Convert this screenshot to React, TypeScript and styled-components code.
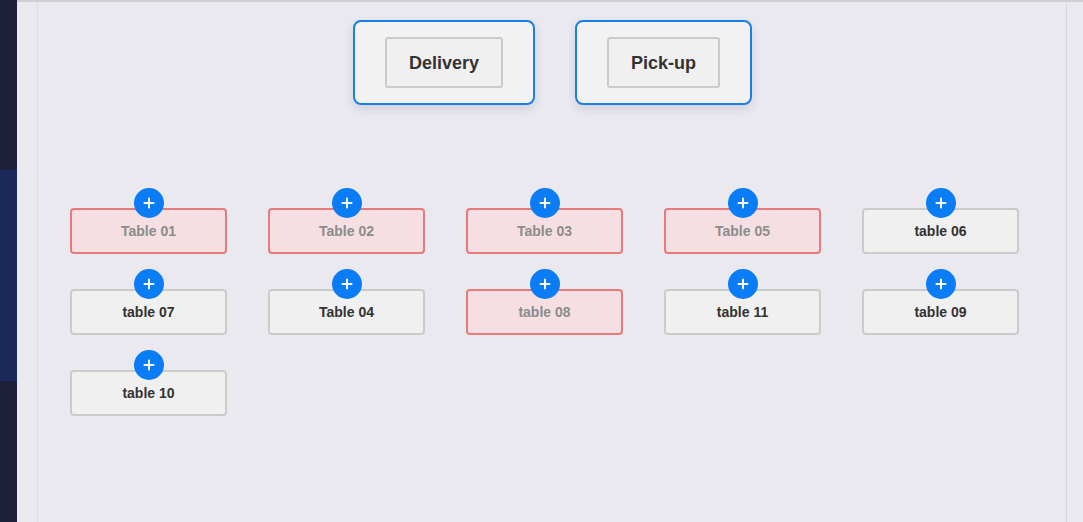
import React from "react";
import styled, { createGlobalStyle } from "styled-components";

const Global = createGlobalStyle`
  html, body { margin: 0; padding: 0; }
  body { font-family: "Liberation Sans", Arial, sans-serif; background: #e9e9ef; }
  * { box-sizing: border-box; }
`;

const Shell = styled.div`
  display: flex;
  height: 522px;
  width: 1083px;
  overflow: hidden;
`;

const Sidebar = styled.nav`
  width: 17px;
  flex: none;
  display: flex;
  flex-direction: column;
  background: #1c2039;
`;

const SideSection = styled.div<{ $active?: boolean; $h: number }>`
  height: ${(p) => p.$h}px;
  background: ${(p) => (p.$active ? "#1b2a5b" : "#1c2039")};
`;

const Main = styled.main`
  flex: 1;
  display: flex;
  border-top: 2px solid #cfcfd4;
  padding: 0 16px 0 20px;
  background: #e9e9ef;
`;

const Content = styled.section`
  flex: 1;
  border-left: 1px solid #dcdce3;
  border-right: 1px solid #d6d6dd;
  padding: 18px 46px 0 32px;
  display: flex;
  flex-direction: column;
`;

const ModeRow = styled.div`
  display: flex;
  justify-content: center;
  gap: 40px;
  padding-left: 15px;
`;

const ModeCard = styled.div`
  border: 2px solid #1a7fe8;
  border-radius: 8px;
  background: #f2f2f3;
  padding: 15px 30px;
  box-shadow: 0 4px 10px rgba(30, 40, 80, 0.12);
  display: flex;
`;

const ModeButton = styled.button`
  height: 51px;
  padding: 1px 22px 0;
  border: 2px solid #cbcbcb;
  border-radius: 3px;
  background: #f0f0f0;
  font-family: "Liberation Sans", Arial, sans-serif;
  font-size: 18px;
  font-weight: 700;
  color: #333;
`;

const TableGrid = styled.div`
  margin-top: 103px;
  display: grid;
  grid-template-columns: repeat(5, 157px);
  column-gap: 41px;
  row-gap: 35px;
`;

const TableCell = styled.div`
  position: relative;
`;

const TableBox = styled.div<{ $busy?: boolean }>`
  height: 46px;
  border: 2px solid ${(p) => (p.$busy ? "#e77a7a" : "#cbcbcb")};
  background: ${(p) => (p.$busy ? "#f5dfe2" : "#f0f0f0")};
  border-radius: 4px;
  display: flex;
  align-items: center;
  justify-content: center;
  font-size: 14px;
  font-weight: 700;
  color: ${(p) => (p.$busy ? "#8c8c8c" : "#333")};
`;

const AddBadge = styled.button`
  position: absolute;
  left: 50%;
  top: -20px;
  transform: translateX(-50%);
  width: 30px;
  height: 30px;
  border-radius: 50%;
  border: none;
  padding: 0;
  background: #0a7cf5;
  display: flex;
  align-items: center;
  justify-content: center;
`;

const tables = [
  { name: "Table 01", busy: true },
  { name: "Table 02", busy: true },
  { name: "Table 03", busy: true },
  { name: "Table 05", busy: true },
  { name: "table 06", busy: false },
  { name: "table 07", busy: false },
  { name: "Table 04", busy: false },
  { name: "table 08", busy: true },
  { name: "table 11", busy: false },
  { name: "table 09", busy: false },
  { name: "table 10", busy: false },
];

const Plus = () => (
  <svg width="12" height="12" viewBox="0 0 12 12">
    <path d="M6 1.5v9M1.5 6h9" stroke="#fff" strokeWidth="2" strokeLinecap="round" />
  </svg>
);

export default function App() {
  return (
    <>
      <Global />
      <Shell>
        <Sidebar>
          <SideSection $h={170} />
          <SideSection $h={211} $active />
          <SideSection $h={141} />
        </Sidebar>
        <Main>
          <Content>
            <ModeRow>
              <ModeCard>
                <ModeButton>Delivery</ModeButton>
              </ModeCard>
              <ModeCard>
                <ModeButton>Pick-up</ModeButton>
              </ModeCard>
            </ModeRow>
            <TableGrid>
              {tables.map((t) => (
                <TableCell key={t.name}>
                  <TableBox $busy={t.busy}>{t.name}</TableBox>
                  <AddBadge aria-label="add">
                    <Plus />
                  </AddBadge>
                </TableCell>
              ))}
            </TableGrid>
          </Content>
        </Main>
      </Shell>
    </>
  );
}
